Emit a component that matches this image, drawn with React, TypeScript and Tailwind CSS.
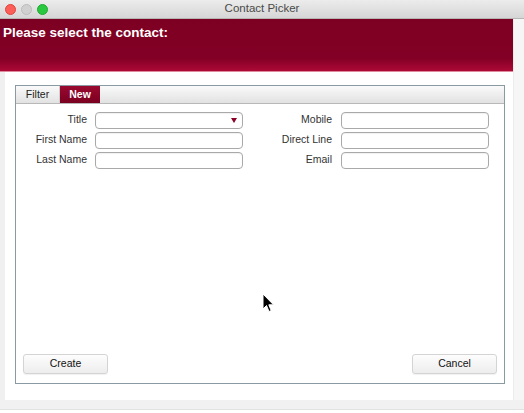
import React from "react";

function Field({ label, select }: { label: string; select?: boolean }) {
  return (
    <div className="flex items-center h-[20px]">
      <div className="w-[71px] text-right text-[10.5px] text-[#333]">{label}</div>
      <div className="ml-[8px] w-[148px] h-[17px] border border-[#a9a9a9] rounded-[4px] bg-white relative shadow-[inset_0_1px_1px_rgba(0,0,0,0.06)]">
        {select && (
          <div className="absolute right-[5px] top-[5px] w-0 h-0 border-l-[3.5px] border-r-[3.5px] border-t-[5px] border-l-transparent border-r-transparent border-t-[#8a0026]" />
        )}
      </div>
    </div>
  );
}

function FieldR({ label }: { label: string }) {
  return (
    <div className="flex items-center h-[20px]">
      <div className="w-[72px] text-right text-[10.5px] text-[#333]">{label}</div>
      <div className="ml-[9px] w-[148px] h-[17px] border border-[#a9a9a9] rounded-[4px] bg-white shadow-[inset_0_1px_1px_rgba(0,0,0,0.06)]" />
    </div>
  );
}

export default function App() {
  return (
    <div className="w-[524px] h-[413px] bg-white relative overflow-hidden font-['Liberation_Sans',Arial,sans-serif]">
      {/* title bar */}
      <div className="h-[19px] bg-gradient-to-b from-[#ececec] to-[#d6d6d6] border-b border-[#b5b5b5] flex items-center relative">
        <div className="flex items-center gap-[5px] pl-[5px]">
          <div className="w-[11px] h-[11px] rounded-full bg-[#fc5f57] border border-[#e0443e]" />
          <div className="w-[11px] h-[11px] rounded-full bg-[#d0d0d0] border border-[#bdbdbd]" />
          <div className="w-[11px] h-[11px] rounded-full bg-[#2ac840] border border-[#1eaa2f]" />
        </div>
        <div className="absolute inset-0 flex items-center justify-center text-[11.5px] text-[#4a4a4a]">
          Contact Picker
        </div>
      </div>

      <div className="flex h-[381px]">
        <div className="w-[513px] flex flex-col">
          {/* red header */}
          <div className="h-[53px] bg-gradient-to-b from-[#7d0022] via-[#820025] via-75% to-[#ad0a36] border-b border-[#e08a9c] px-[3px] pt-[5px]">
            <div className="text-white font-bold text-[13.5px] leading-[18px]">Please select the contact:</div>
          </div>
          {/* content */}
          <div className="flex-1 flex">
            <div className="w-[5px] bg-[#f0f0f0]" />
            <div className="flex-1 pl-[10px] pr-[8px] pt-[13px] pb-[16px] flex flex-col">
              <div className="flex-1 border border-[#8a9aa3] flex flex-col">
                {/* tab bar */}
                <div className="h-[18px] bg-gradient-to-b from-[#fafafa] to-[#e2e2e2] border-b border-[#b8b8b8] flex">
                  <div className="w-[44px] flex items-center justify-center text-[10.5px] text-[#222] border-r border-[#cfcfcf]">Filter</div>
                  <div className="w-[40px] flex items-center justify-center text-[10.5px] font-bold text-white bg-gradient-to-b from-[#9a0a30] to-[#7a0020]">New</div>
                </div>
                {/* form */}
                <div className="flex pt-[6px]">
                  <div className="flex flex-col">
                    <Field label="Title" select />
                    <Field label="First Name" />
                    <Field label="Last Name" />
                  </div>
                  <div className="flex flex-col ml-[17px]">
                    <FieldR label="Mobile" />
                    <FieldR label="Direct Line" />
                    <FieldR label="Email" />
                  </div>
                </div>
                <div className="flex-1" />
                <div className="flex justify-between px-[7px] pb-[9px]">
                  <div className="w-[85px] h-[20px] rounded-[3px] border border-[#d4d4d4] bg-gradient-to-b from-[#fdfdfd] to-[#ededed] flex items-center justify-center text-[10.5px] text-[#111] shadow-[0_1px_1px_rgba(0,0,0,0.06)]">Create</div>
                  <div className="w-[85px] h-[20px] rounded-[3px] border border-[#d4d4d4] bg-gradient-to-b from-[#fdfdfd] to-[#ededed] flex items-center justify-center text-[10.5px] text-[#111] shadow-[0_1px_1px_rgba(0,0,0,0.06)]">Cancel</div>
                </div>
              </div>
            </div>
          </div>
        </div>
        <div className="flex-1 bg-[#f6f6f6] border-l border-[#ececec]" />
      </div>
      {/* bottom strip */}
      <div className="absolute left-0 right-0 top-[400px] h-[10px] bg-[#f1f1f1] border-b border-[#e2e2e2]" />

      {/* cursor */}
      <svg className="absolute left-[262px] top-[293px]" width="12" height="20" viewBox="0 0 12 20">
        <path d="M1 1 L1 16 L4.5 12.5 L7 18.5 L9.2 17.6 L6.8 11.8 L11.5 11.8 Z" fill="#000" stroke="#fff" strokeWidth="1" strokeLinejoin="round" />
      </svg>
    </div>
  );
}
